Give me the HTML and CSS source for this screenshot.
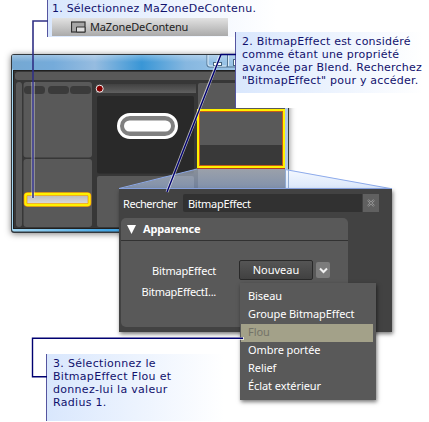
FILE: index.html
```html
<!DOCTYPE html>
<html lang="fr">
<head>
<meta charset="utf-8">
<title>BitmapEffect</title>
<link rel="stylesheet" href="styles.css">
</head>
<body>
<main class="diagram">
  <svg class="workspace" width="429" height="422" viewBox="0 0 429 422">
    <defs>
      <linearGradient id="title"><stop offset="0" stop-color="#75a8d2"/><stop offset=".15" stop-color="#75abda"/><stop offset=".3" stop-color="#96bce0"/><stop offset=".47" stop-color="#3996d6"/><stop offset=".63" stop-color="#86b7e0"/><stop offset="1" stop-color="#b5d4ef"/></linearGradient>
      <linearGradient id="frame"><stop offset="0" stop-color="#a4d8f3"/><stop offset=".35" stop-color="#42a5e4"/><stop offset="1" stop-color="#aec8e4"/></linearGradient>
      <linearGradient id="shine" x2="0" y2="1"><stop offset="0" stop-color="#fff" stop-opacity=".3"/><stop offset="1" stop-color="#fff" stop-opacity="0"/></linearGradient>
      <linearGradient id="tab" x2="0" y2="1"><stop offset="0" stop-color="#424242"/><stop offset="1" stop-color="#606060"/></linearGradient>
      <linearGradient id="silver" x2="0" y2="1"><stop offset="0" stop-color="#b7b7b7"/><stop offset="1" stop-color="#dedede"/></linearGradient>
      <linearGradient id="beam" x2="0" y2="1"><stop offset="0" stop-color="#dce8fb" stop-opacity=".5"/><stop offset="1" stop-color="#9fbdf0" stop-opacity=".55"/></linearGradient>
      <linearGradient id="beamLight" x2="0" y2="1"><stop offset="0" stop-color="#f5f9ff"/><stop offset="1" stop-color="#dae7fb"/></linearGradient>
      <filter id="shadow" x="-10%" y="-10%" width="120%" height="120%"><feDropShadow dx="0" dy="1" stdDeviation="3" flood-color="#000" flood-opacity=".5"/></filter>
    </defs>
    <rect x="11" y="54" width="278" height="179" rx="3" fill="#30373e" filter="url(#shadow)"/>
    <rect x="12" y="55" width="276" height="176.500" rx="2" fill="url(#frame)"/>
    <rect x="12" y="55" width="276" height="15" rx="2" fill="url(#title)"/>
    <rect x="12" y="55" width="276" height="7" fill="url(#shine)"/>
    <path d="M207 55v10q0 2 2 2h40M227.500 55v12" fill="none" stroke="#53738f"/>
    <path d="M208 55v9q0 2 2 2h16M228.500 55v11" fill="none" stroke="#dcecf8"/>
    <rect x="213.500" y="62.500" width="8" height="3" fill="#fff" stroke="#46657f"/>
    <rect x="233.500" y="59.500" width="6" height="6" fill="#fff" stroke="#46657f"/>
    <rect x="13" y="70" width="272" height="159" fill="#373737"/>
    <path d="M13 70.500h272M13.500 71v158M13 228.500h272" stroke="#202020" fill="none"/>
    <g fill="#595959">
      <rect x="15" y="72" width="270" height="8" rx="3"/>
      <rect x="16" y="82" width="6" height="145" rx="3"/>
      <rect x="23.500" y="82" width="68.500" height="75.500" rx="3"/>
      <rect x="23.500" y="159" width="68.500" height="68" rx="3"/>
      <rect x="97" y="176" width="97" height="51" rx="2"/>
      <rect x="198" y="83" width="87" height="144" rx="2"/>
    </g>
    <g fill="#3b3b3b"><rect x="24" y="86" width="21" height="8" rx="3.500"/><rect x="48" y="86" width="21" height="8" rx="3.500"/><rect x="70" y="86" width="21" height="8" rx="3.500"/></g>
    <rect x="96" y="84" width="100" height="9" fill="url(#tab)"/>
    <rect x="97" y="96" width="97" height="77.500" rx="2" fill="#292929"/>
    <circle cx="99.700" cy="88.700" r="3.500" fill="#850000" stroke="#eee" stroke-width="1"/>
    <rect x="118.500" y="114.500" width="58" height="23" rx="11.500" fill="#808080" stroke="#fff" stroke-width="3"/>
    <rect x="124" y="120.500" width="47" height="11" rx="5.500" fill="#fff"/>
    <rect x="198" y="145" width="86" height="21" fill="#393939"/>
    <path d="M119 189L197 169H284L392 189Z" fill="url(#beam)"/>
    <path d="M285 169L392 189H285Z" fill="url(#beamLight)"/>
    <path d="M285.500 170v19M288.500 170v19" stroke="#91acd3"/>
    <path d="M119 188.500L197 169M285 169.500L392 188.800M119 188.500H392" stroke="#8eabeb" fill="none"/>
    <rect x="199.500" y="111.500" width="83" height="54" fill="none" stroke="#c85b18" stroke-width="1"/>
    <path d="M197.500 168.500V109.500H285" fill="none" stroke="#e78522"/>
    <path d="M198 168.500H285" fill="none" stroke="#b53a28"/>
    <rect x="198" y="110" width="86" height="57" fill="none" stroke="#fff000" stroke-width="2"/>
    <rect x="25.500" y="194" width="64" height="11" rx="2" fill="url(#silver)" stroke="#f58a08" stroke-width="3.600"/>
    <rect x="25.500" y="194" width="64" height="11" rx="2" fill="none" stroke="#fff200" stroke-width="2.300"/>
  </svg>

  <section class="callout first">
    <p>1. Sélectionnez MaZoneDeContenu.</p>
    <div class="node">
      <svg width="15" height="12" viewBox="0 0 15 12"><rect x=".5" y="1" width="13.500" height="10" fill="#a6a6a6" stroke="#333" stroke-width="1.200"/><path d="M5.500 11V6H14V11z" fill="#ddd" stroke="#333"/></svg>
      <span>MaZoneDeContenu</span>
    </div>
  </section>

  <section class="callout second">
    <p>2. BitmapEffect est considéré<br>comme étant une propriété<br>avancée par Blend. Recherchez<br>"BitmapEffect" pour y accéder.</p>
  </section>

  <section class="inspector">
    <div class="search">
      <label>Rechercher</label>
      <div class="field">BitmapEffect</div>
      <div class="clear"><svg width="10" height="10" viewBox="0 0 10 10"><path d="M2 2l6 6M8 2L2 8" stroke="#999" stroke-width="2"/><path d="M2 2l6 6M8 2L2 8" stroke="#5d5d5d" stroke-width=".8"/></svg></div>
    </div>
    <div class="category">
      <h2><svg width="9" height="9" viewBox="0 0 9 9"><path d="M0 0h9L4.500 9z" fill="#fff"/></svg><span>Apparence</span></h2>
      <div class="property"><span class="name">BitmapEffect</span><span class="new">Nouveau</span><span class="drop"><svg width="9" height="7" viewBox="0 0 9 7"><path d="M1 1.500l3.500 3.500L8 1.500" fill="none" stroke="#f2f2f2" stroke-width="2"/></svg></span></div>
      <div class="property lower"><span class="name short">BitmapEffectI...</span></div>
    </div>
  </section>

  <ul class="menu"><li>Biseau</li><li>Groupe BitmapEffect</li><li class="active">Flou</li><li>Ombre portée</li><li>Relief</li><li>Éclat extérieur</li></ul>

  <section class="callout third">
    <p>3. Sélectionnez le<br>BitmapEffect Flou et<br>donnez-lui la valeur<br>Radius 1.</p>
  </section>

  <svg class="connectors" width="429" height="422" viewBox="0 0 429 422">
    <g fill="none" stroke="#fff" stroke-width="3" opacity=".65"><path d="M33 82V198"/><path d="M220 56L167 192"/><path d="M235 338.500H244"/></g>
    <path d="M48 21H33V198" fill="none" stroke="#303085" stroke-width="1.600"/>
    <path d="M236 54.500H221L167 192M243 338.200H32.500V376.800H47" fill="none" stroke="#000070" stroke-width="1.400"/>
  </svg>
</main>
</body>
</html>
```
FILE: styles.css
```css
* { box-sizing: border-box; }
body { margin: 0; background: #fff; }
p, h2, ul { margin: 0; padding: 0; }
svg { display: block; flex: none; }
.diagram { position: relative; width: 429px; height: 422px; overflow: hidden; font-family: "Noto Sans", sans-serif; }
.workspace, .connectors { position: absolute; inset: 0; }
.callout { position: absolute; color: #11116d; font: 11px/13px "DejaVu Sans", sans-serif; letter-spacing: .22px; white-space: nowrap; border-left: 1px solid #5555a0; }
.first { left: 47px; top: 0; width: 230px; height: 37px; padding: 2px 0 0 4px; background: linear-gradient(90deg, #d9e7fd, #fff); }
.node { display: flex; align-items: center; gap: 4px; width: 176px; height: 18px; margin-top: 3px; padding-left: 19px; color: #222; font: 11px/18px "Noto Sans", sans-serif; letter-spacing: -.15px; background: linear-gradient(#e2e2e2, #aaa); }
.second { left: 235px; top: 32px; width: 188px; height: 76px; padding: 3px 0 0 6px; background: linear-gradient(90deg, #d9e7fd, #fff) 0 0 / 100% 61px no-repeat #fff; }
.third { left: 46px; top: 354px; width: 178px; height: 67px; padding: 3px 0 0 6px; letter-spacing: .3px; background: linear-gradient(90deg, #d9e7fd, #fff); }
.inspector { position: absolute; left: 119px; top: 189px; width: 273px; height: 143px; padding: 5px 0 0 2px; color: #fff; font-size: 11px; background: #424242; box-shadow: 1px 2px 4px #0008; }
.search { display: flex; height: 18px; line-height: 20px; letter-spacing: -.45px; padding-left: 2px; }
.search label { width: 60px; }
.field { width: 179px; padding-left: 5px; letter-spacing: -.3px; background: #313131; border-radius: 2px 0 0 2px; }
.clear { display: grid; place-items: center; width: 16px; margin-left: 1px; background: #606060; }
.category { width: 227px; height: 109px; margin-top: 6px; background: #595959; border-radius: 5px; }
.category h2 { display: flex; align-items: center; gap: 7px; height: 23px; padding-left: 6px; font-size: 11px; line-height: 20px; letter-spacing: -.15px; border-bottom: 1px solid #323232; }
.property { display: flex; align-items: center; height: 20px; margin-top: 19px; }
.name { width: 95px; text-align: right; letter-spacing: -.2px; }
.short { letter-spacing: -.28px; }
.new { width: 74px; height: 20px; margin-left: 23px; text-align: center; line-height: 17px; border: 1px solid #292929; border-radius: 2px; background: linear-gradient(#555, #414141); }
.drop { display: grid; place-items: center; width: 14px; height: 16px; margin-left: 3px; background: #7c7c7c; border-radius: 2px; }
.lower { margin-top: 1px; }
.menu { position: absolute; left: 240px; top: 283px; width: 136px; height: 117px; padding: 5px 3px 0 1px; list-style: none; color: #fff; font-size: 11px; line-height: 16px; letter-spacing: -.08px; background: #595959; box-shadow: 1px 2px 4px #0008; }
.menu li { height: 18px; padding-left: 7px; white-space: nowrap; }
.menu .active { color: #747368; background: #a3a189; }
```
